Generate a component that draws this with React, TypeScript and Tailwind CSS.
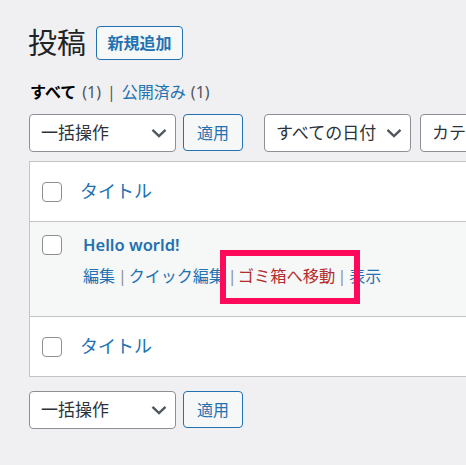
const font = { fontFamily: '"Noto Sans", "Noto Sans CJK JP", sans-serif' };

function Chevron() {
  return (
    <svg width="16" height="10" viewBox="0 0 16 10" className="shrink-0">
      <path d="M1.5 1.8 L8 8 L14.5 1.8" fill="none" stroke="#50575e" strokeWidth="2.4" />
    </svg>
  );
}

function Select({ label, w, chevron = true }: { label: string; w: string; chevron?: boolean }) {
  return (
    <div className={`${w} h-[38px] shrink-0 flex items-center justify-between bg-white border border-[#8c8f94] rounded-[4px] pl-[11px] pr-[8px] text-[17px] text-[#2c3338]`}>
      <span className="whitespace-nowrap">{label}</span>
      {chevron && <Chevron />}
    </div>
  );
}

function Apply() {
  return (
    <div className="w-[60px] h-[37px] shrink-0 flex items-center justify-center bg-[#f6f7f7] border border-[#2271b1] rounded-[4px] text-[16px] text-[#2271b1]">
      適用
    </div>
  );
}

function Check() {
  return <div className="w-5 h-5 shrink-0 bg-white border border-[#8c8f94] rounded-[4px]" />;
}

function TitleRow() {
  return (
    <div className="h-[59px] flex items-center pl-[12px] gap-[18px] bg-white">
      <Check />
      <span className="text-[18px] text-[#2271b1]">タイトル</span>
    </div>
  );
}

export default function App() {
  return (
    <div className="w-[466px] h-[465px] overflow-hidden bg-[#f0f0f2] pl-[29px] pt-[26px] relative" style={font}>
      <div className="flex items-center h-[34px]">
        <h1 className="w-[68px] -ml-[1px] text-[29px] leading-[34px] text-[#1d2327] font-normal">投稿</h1>
        <div className="w-[87px] h-[34px] flex items-center justify-center bg-[#f6f7f7] border border-[#2271b1] rounded-[4px] text-[16px] font-semibold text-[#2271b1]">
          新規追加
        </div>
      </div>

      <div className="mt-[20px] h-[24px] flex items-center pl-[1px] text-[16px] whitespace-nowrap">
        <b className="font-bold text-black">すべて</b>
        <span className="ml-[6px] text-[#50575e] text-[16px]">(1)</span>
        <span className="ml-[6px] mr-[6px] text-[#50575e]">|</span>
        <span className="text-[#2271b1]">公開済み</span>
        <span className="ml-[5px] text-[#50575e] text-[16px]">(1)</span>
      </div>

      <div className="mt-[10px] flex items-start w-[500px]">
        <Select label="一括操作" w="w-[147px]" />
        <div className="ml-[7px]"><Apply /></div>
        <div className="ml-[21px]"><Select label="すべての日付" w="w-[147px]" /></div>
        <div className="ml-[9px]"><Select label="カテゴリー" w="w-[147px]" chevron={false} /></div>
      </div>

      <div className="mt-[9px] w-[480px] border border-[#c3c4c7] border-r-0">
        <div className="border-b border-[#c3c4c7]">
          <TitleRow />
        </div>
        <div className="h-[95px] bg-[#f6f7f7] border-b border-[#c3c4c7] flex pl-[12px] pt-[13px] gap-[21px]">
          <Check />
          <div>
            <div className="-mt-[1px] text-[16.5px] leading-[22px] font-semibold text-[#2271b1]">Hello world!</div>
            <div className="mt-[9px] text-[16px] leading-[22px] whitespace-nowrap flex">
              <span className="text-[#2271b1]">編集</span>
              <span className="ml-[3px] mr-[2px] text-[#8a9096]">|</span>
              <span className="text-[#2271b1]">クイック編集</span>
              <span className="ml-[3px] mr-[1px] text-[#8a9096]">|</span>
              <span className="text-[16.3px] text-[#b32d2e]">ゴミ箱へ移動</span>
              <span className="mx-[2px] text-[#8a9096]">|</span>
              <span className="ml-[1px] text-[#2271b1]">表示</span>
            </div>
          </div>
        </div>
        <TitleRow />
      </div>

      <div className="mt-[14px] flex items-start">
        <Select label="一括操作" w="w-[147px]" />
        <div className="ml-[7px]"><Apply /></div>
      </div>

      <div className="absolute left-[220px] top-[250px] w-[140px] h-[54px] border-[6px] border-[#ff0a5a]" />
    </div>
  );
}
